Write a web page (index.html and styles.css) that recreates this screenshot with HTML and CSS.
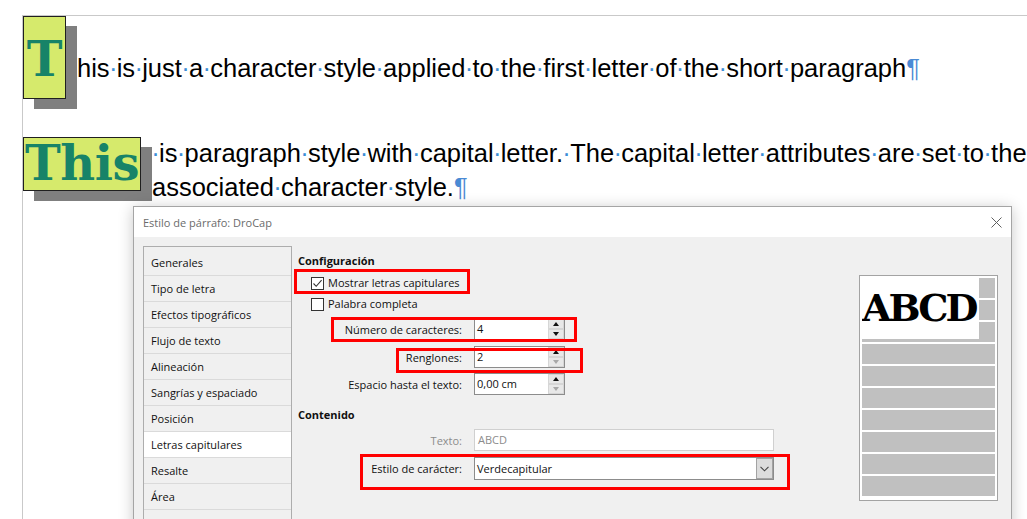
FILE: index.html
```html
<!DOCTYPE html>
<html lang="es">
<head>
<meta charset="utf-8">
<title>DroCap</title>
<link rel="stylesheet" href="styles.css">
</head>
<body>
<div class="page">
  <div class="para p1">
    <div class="cap cap1">T</div>
    <div class="txt">his<span class="sp">·</span>is<span class="sp">·</span>just<span class="sp">·</span>a<span class="sp">·</span>character<span class="sp">·</span>style<span class="sp">·</span>applied<span class="sp">·</span>to<span class="sp">·</span>the<span class="sp">·</span>first<span class="sp">·</span>letter<span class="sp">·</span>of<span class="sp">·</span>the<span class="sp">·</span>short<span class="sp">·</span>paragraph<span class="pil">¶</span></div>
  </div>
  <div class="para p2">
    <div class="cap cap2">This</div>
    <div class="txt"><span class="sp">·</span>is<span class="sp">·</span>paragraph<span class="sp">·</span>style<span class="sp">·</span>with<span class="sp">·</span>capital<span class="sp">·</span>letter.<span class="sp">·</span>The<span class="sp">·</span>capital<span class="sp">·</span>letter<span class="sp">·</span>attributes<span class="sp">·</span>are<span class="sp">·</span>set<span class="sp">·</span>to<span class="sp">·</span>the<br>associated<span class="sp">·</span>character<span class="sp">·</span>style.<span class="pil">¶</span></div>
  </div>
</div>

<div class="dialog">
  <div class="titlebar">
    <span class="title">Estilo de párrafo: DroCap</span>
    <svg class="close" width="11" height="11" viewBox="0 0 11 11"><path d="M0.5 0.5 L10.5 10.5 M10.5 0.5 L0.5 10.5" stroke="#5f5f5f" stroke-width="1" fill="none"/></svg>
  </div>
  <div class="dbody">
    <ul class="tabs">
      <li>Generales</li>
      <li>Tipo de letra</li>
      <li>Efectos tipográficos</li>
      <li>Flujo de texto</li>
      <li>Alineación</li>
      <li>Sangrías y espaciado</li>
      <li>Posición</li>
      <li class="sel">Letras capitulares</li>
      <li>Resalte</li>
      <li>Área</li>
      <li>Transparencia</li>
    </ul>
    <div class="pane">
      <div class="form">
        <div class="head">Configuración</div>
        <div class="cb cb1"><span class="box"><svg width="11" height="11" viewBox="0 0 11 11"><path d="M1.5 5.5 L4.2 8.3 L9.6 2.2" stroke="#333" stroke-width="1.1" fill="none"/></svg></span>Mostrar letras capitulares</div>
        <div class="cb cb2"><span class="box"></span>Palabra completa</div>
        <div class="field f1"><span class="lbl">Número de caracteres:</span>
          <div class="spin"><span class="val">4</span><div class="btns"><span class="btn"><i class="up"></i></span><span class="btn"><i class="dn"></i></span></div></div></div>
        <div class="field f2"><span class="lbl">Renglones:</span>
          <div class="spin"><span class="val">2</span><div class="btns"><span class="btn"><i class="up"></i></span><span class="btn"><i class="dn off"></i></span></div></div></div>
        <div class="field f3"><span class="lbl">Espacio hasta el texto:</span>
          <div class="spin"><span class="val">0,00 cm</span><div class="btns"><span class="btn"><i class="up"></i></span><span class="btn"><i class="dn off"></i></span></div></div></div>
        <div class="head h2">Contenido</div>
        <div class="field f4"><span class="lbl dis">Texto:</span><div class="tinput">ABCD</div></div>
        <div class="field f5"><span class="lbl">Estilo de carácter:</span>
          <div class="combo"><span class="cval">Verdecapitular</span><span class="drop"><svg width="9" height="6" viewBox="0 0 9 6"><path d="M0.5 0.8 L4.5 4.8 L8.5 0.8" stroke="#444" stroke-width="1.1" fill="none"/></svg></span></div></div>
      </div>
      <div class="preview">
        <div class="bar"></div><div class="bar"></div><div class="bar"></div><div class="bar"></div><div class="bar"></div>
        <div class="bar"></div><div class="bar"></div><div class="bar"></div><div class="bar"></div><div class="bar"></div>
        <div class="pcap">ABCD</div>
      </div>
    </div>
  </div>
</div>

<div class="mark m1"></div>
<div class="mark m2"></div>
<div class="mark m3"></div>
<div class="mark m4"></div>
</body>
</html>
```
FILE: styles.css
```css
html, body {
  margin: 0;
  padding: 0;
  width: 1027px;
  height: 519px;
  overflow: hidden;
  background: #fff;
}
body { position: relative; }

/* document */
.page {
  margin: 15px 0 0 22px;
  height: 600px;
  border-top: 1px solid #c9c9c9;
  border-left: 1px solid #c9c9c9;
}
.para { display: flex; align-items: flex-start; }
.p2 { margin-top: 35px; }
.cap {
  flex: none;
  box-sizing: border-box;
  border: 1px solid #1f1f1f;
  background: #d6ea6c;
  box-shadow: 11px 10px 0 #7f7f7f;
  font-family: "DejaVu Serif", serif;
  font-weight: bold;
  font-size: 48px;
  line-height: 48px;
  color: #178368;
  text-align: center;
  white-space: nowrap;
}
.cap1 { width: 43px; height: 83px; padding-top: 18px; }
.cap2 { width: 118px; height: 54px; padding-top: 1px; margin-top: 3px; letter-spacing: -0.5px; }
.txt {
  font-family: "Liberation Sans", Arial, sans-serif;
  font-size: 25.5px;
  line-height: 34px;
  color: #000;
  white-space: nowrap;
  margin-left: 11px;
}
.p1 .txt { margin-top: 35px; }
.p2 .txt { margin-top: 1.5px; }
.sp {
  display: inline-flex;
  justify-content: center;
  width: 0.278em;
  color: #3b8ed6;
}
.pil { color: #4a8ad4; }

/* dialog */
.dialog {
  position: absolute;
  left: 133px;
  top: 206px;
  width: 879px;
  height: 340px;
  box-sizing: border-box;
  border: 1px solid #a5a5a5;
  background: #f0f0f0;
  box-shadow: 0 2px 14px rgba(0,0,0,0.22);
  overflow: hidden;
  font-family: "Open Sans", "Noto Sans", sans-serif;
  font-size: 11px;
  color: #111;
}
.titlebar {
  height: 30px;
  background: #fff;
  display: flex;
  align-items: center;
  justify-content: space-between;
  padding: 0 9px;
  color: #6b6b6b;
}
.title { font-size: 11px; }
.dbody {
  display: flex;
  padding: 9px 0 0 9px;
  height: 300px;
}
.tabs {
  flex: none;
  list-style: none;
  margin: 0;
  padding: 3px 0 0;
  width: 149px;
  box-sizing: border-box;
  border: 1px solid #adadad;
  border-bottom: none;
  background: #f0f0f0;
}
.tabs li {
  height: 25px;
  line-height: 25px;
  border-bottom: 1px solid #dadada;
  padding-left: 7px;
}
.tabs li.sel { background: #fff; }

.pane { flex: 1; display: flex; }
.form {
  flex: 1;
  display: flex;
  flex-direction: column;
  align-items: flex-start;
  padding: 7px 0 0 6px;
}
.head { font-weight: bold; height: 16px; line-height: 16px; }
.h2 { margin-top: 12px; }
.cb { display: flex; align-items: center; height: 16px; line-height: 16px; margin-left: 13px; }
.cb1 { margin-top: 6px; }
.cb2 { margin-top: 5px; }
.box {
  width: 13px; height: 13px;
  box-sizing: border-box;
  border: 1px solid #333;
  background: #fff;
  margin-right: 4px;
  display: flex;
}
.box svg { display: block; }

.field { display: flex; align-items: center; }
.f1 { margin-top: 6px; }
.f2 { margin-top: 6px; }
.f3 { margin-top: 5px; }
.f4 { margin-top: 6px; }
.f5 { margin-top: 6px; }
.lbl { width: 164px; text-align: right; margin-right: 12px; }
.lbl.dis { color: #8c8c8c; }

.spin {
  width: 91px; height: 22px;
  box-sizing: border-box;
  border: 1px solid #8c8c8c;
  background: #fff;
  display: flex;
  justify-content: space-between;
}
.val { padding-left: 2px; line-height: 20px; }
.btns { display: flex; flex-direction: column; width: 16px; }
.btn {
  height: 10px;
  box-sizing: border-box;
  border: 1px solid #d6d6d6;
  background: #e8e8e8;
  display: flex;
  align-items: center;
  justify-content: center;
}
.up, .dn { width: 0; height: 0; border-left: 3.5px solid transparent; border-right: 3.5px solid transparent; }
.up { border-bottom: 4px solid #111; }
.dn { border-top: 4px solid #111; }
.dn.off { border-top-color: #a8a8a8; }

.tinput {
  width: 300px; height: 22px;
  box-sizing: border-box;
  border: 1px solid #d0d0d0;
  background: #fff;
  color: #8c8c8c;
  padding-left: 3px;
  line-height: 20px;
}
.combo {
  width: 300px; height: 23px;
  box-sizing: border-box;
  border: 1px solid #8c8c8c;
  background: #fff;
  display: flex;
  justify-content: space-between;
}
.cval { padding-left: 2px; line-height: 21px; }
.drop {
  width: 17px;
  box-sizing: border-box;
  border: 1px solid #a3a3a3;
  background: #dcdcdc;
  display: flex;
  align-items: center;
  justify-content: center;
}

.preview {
  flex: none;
  position: relative;
  width: 139px;
  height: 226px;
  box-sizing: border-box;
  border: 1px solid #a3a3a3;
  background: #fff;
  padding: 2px 2px 3px 2px;
  margin: 29px 13px 0 0;
  display: flex;
  flex-direction: column;
  gap: 2px;
}
.bar { height: 20px; flex: none; background: #c0c0c0; }
.pcap {
  position: absolute;
  left: 2px; top: 2px;
  width: 117px; height: 61px;
  box-sizing: border-box;
  background: #fff;
  padding-top: 11px;
  font-family: "DejaVu Serif", serif;
  font-weight: bold;
  font-size: 38px;
  line-height: 38px;
  letter-spacing: -3px;
  color: #000;
  white-space: nowrap;
  overflow: hidden;
}

/* red annotation boxes */
.mark {
  position: absolute;
  box-sizing: border-box;
  border: 3px solid #ff0000;
}
.m1 { left: 294px; top: 269px; width: 176px; height: 25px; }
.m2 { left: 331px; top: 317px; width: 246px; height: 25px; }
.m3 { left: 396px; top: 348px; width: 187px; height: 25px; }
.m4 { left: 360px; top: 454px; width: 430px; height: 36px; }
```
